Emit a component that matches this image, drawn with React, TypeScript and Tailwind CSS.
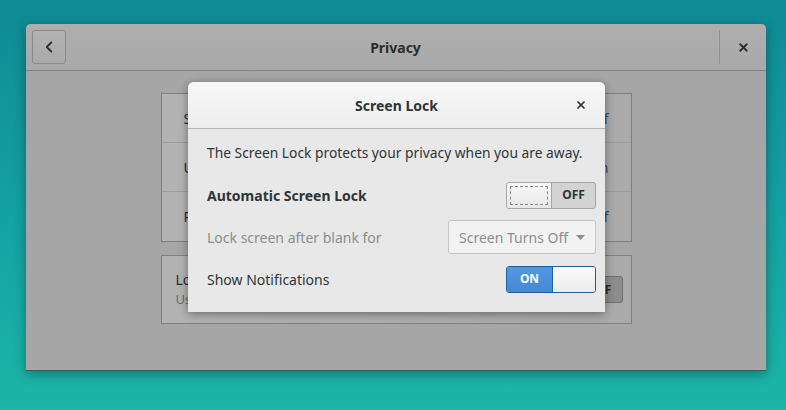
import { X, ChevronLeft } from 'lucide-react';

const font = { fontFamily: '"Noto Sans", "Open Sans", sans-serif' };

const Switch = ({ on, focused }: { on: boolean; focused?: boolean }) => {
  if (on) {
    return (
      <div className="flex h-[27px] w-[90px] overflow-hidden rounded-[3px] border border-[#215d9c]">
        <div className="flex w-[45px] items-center justify-center bg-gradient-to-b from-[#5197e0] to-[#4689d6] text-[12px] font-bold text-white">
          ON
        </div>
        <div className="flex-1 border-l border-[#215d9c] bg-gradient-to-b from-[#fafafa] to-[#ececec]" />
      </div>
    );
  }
  return (
    <div className="flex h-[27px] w-[90px] overflow-hidden rounded-[3px] border border-[#a6a6a6] bg-[#d3d3d3]">
      <div className="relative w-[45px] border-r border-[#a6a6a6] bg-gradient-to-b from-[#f8f8f8] to-[#e8e8e8]">
        {focused && <div className="absolute inset-[3px] border border-dashed border-[#8d8d8d]" />}
      </div>
      <div className="flex flex-1 items-center justify-center text-[12px] font-bold text-[#2e3436]">OFF</div>
    </div>
  );
};

const BgRow = ({ label, value, last }: { label: string; value: string; last?: boolean }) => (
  <div className={`flex h-[49px] items-center justify-between pl-[22px] pr-[22px] ${last ? '' : 'border-b border-[#9c9c9c]'}`}>
    <span className="text-[14px] text-[#2a2c2d]">{label}</span>
    <span className="text-[14px] text-[#2e4f72]">{value}</span>
  </div>
);

export default function App() {
  return (
    <div
      className="h-[410px] w-[786px] overflow-hidden bg-gradient-to-b from-[#0f8a94] via-[#14a0a2] to-[#1bb6a8] pt-[24px] pl-[26px]"
      style={font}
    >
      <div className="relative flex h-[347px] w-[740px] flex-col overflow-hidden rounded-t-[5px] border-b border-[#3d5c5a] bg-[#a6a6a6] shadow-[0_3px_12px_rgba(0,0,0,0.35)]">
        {/* header bar */}
        <div className="flex h-[47px] items-center border-b border-[#848484] bg-gradient-to-b from-[#aeaeae] to-[#a9a9a9] pl-[6px]">
          <div className="flex h-[34px] w-[34px] items-center justify-center rounded-[3px] border border-[#8a8a8a] bg-gradient-to-b from-[#b3b3b3] to-[#a9a9a9]">
            <ChevronLeft className="h-[18px] w-[18px] text-[#2b2d2e]" strokeWidth={2.4} />
          </div>
          <div className="flex-1 pl-[6px] text-center text-[14px] font-bold text-[#2b2d2e]">Privacy</div>
          <div className="h-[34px] w-px bg-[#909090]" />
          <div className="flex w-[46px] items-center justify-center">
            <X className="h-[13px] w-[13px] text-[#2b2d2e]" strokeWidth={3.4} />
          </div>
        </div>

        {/* dimmed content */}
        <div className="flex flex-1 flex-col items-center pt-[22px]">
          <div className="w-[471px] border border-[#7f7f7f] bg-gradient-to-r from-[#b3b3b3] to-[#aaaaaa]">
            <BgRow label="Screen Lock" value="Off" />
            <BgRow label="Usage & History" value="On" />
            <BgRow label="Purge Trash & Temporary Files" value="Off" last />
          </div>
          <div className="mt-[13px] flex h-[69px] w-[471px] items-center justify-between border border-[#7f7f7f] bg-gradient-to-r from-[#b3b3b3] to-[#aaaaaa] pl-[14px] pr-[8px]">
            <div className="flex flex-col">
              <span className="text-[14px] text-[#2a2c2d]">Location Services</span>
              <span className="text-[13px] text-[#6a6c6d]">Used by applications</span>
            </div>
            <div className="flex h-[27px] w-[90px] overflow-hidden rounded-[3px] border border-[#6e6e6e] bg-[#8c8c8c]">
              <div className="w-[45px] border-r border-[#6e6e6e] bg-[#a8a8a8]" />
              <div className="flex flex-1 items-center justify-center text-[12px] font-bold text-[#2a2c2d]">OFF</div>
            </div>
          </div>
        </div>

        {/* dialog */}
        <div className="absolute left-[162px] top-[58px] flex h-[230px] w-[417px] flex-col overflow-hidden rounded-t-[6px] bg-[#e8e8e8] shadow-[0_2px_10px_rgba(0,0,0,0.4)]">
          <div className="relative flex h-[47px] items-center justify-center border-b border-[#b4b4b4] bg-gradient-to-b from-[#f7f7f7] to-[#eeeeee]">
            <span className="text-[14px] font-bold text-[#2e3436]">Screen Lock</span>
            <X className="absolute right-[18px] top-[17px] h-[12px] w-[12px] text-[#2e3436]" strokeWidth={3.4} />
          </div>
          <div className="flex flex-col pl-[19px] pr-[9px] pt-[3px]">
            <div className="flex h-[42px] items-center whitespace-nowrap text-[13.8px] text-[#2e3436]">
              The Screen Lock protects your privacy when you are away.
            </div>
            <div className="flex h-[42px] items-center justify-between">
              <span className="text-[14px] font-bold text-[#2e3436]">Automatic Screen Lock</span>
              <Switch on={false} focused />
            </div>
            <div className="flex h-[42px] items-center justify-between">
              <span className="text-[14px] text-[#8b8e8f]">Lock screen after blank for</span>
              <div className="flex h-[34px] w-[148px] items-center justify-between rounded-[3px] border border-[#c4c4c4] bg-[#f2f2f2] pl-[10px] pr-[10px]">
                <span className="text-[14px] text-[#8b8e8f]">Screen Turns Off</span>
                <svg width="9" height="5" viewBox="0 0 9 5">
                  <path d="M0 0 L9 0 L4.5 5 Z" fill="#8b8e8f" />
                </svg>
              </div>
            </div>
            <div className="flex h-[42px] items-center justify-between">
              <span className="text-[14px] text-[#2e3436]">Show Notifications</span>
              <Switch on />
            </div>
          </div>
        </div>
      </div>
    </div>
  );
}
